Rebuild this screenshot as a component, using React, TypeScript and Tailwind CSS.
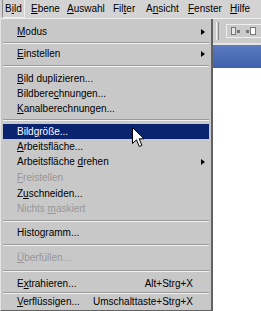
import React from "react";

type Item =
  | { kind: "item"; label: React.ReactNode; h?: number; sub?: boolean; shortcut?: string; disabled?: boolean; active?: boolean }
  | { kind: "sep"; h: number };

const u = (s: string) => <u className="underline underline-offset-[1px]">{s}</u>;

const items: Item[] = [
  { kind: "item", label: <>{u("M")}odus</>, sub: true },
  { kind: "sep", h: 7 },
  { kind: "item", label: <>{u("E")}instellen</>, sub: true },
  { kind: "sep", h: 10 },
  { kind: "item", label: <>{u("B")}ild duplizieren...</> },
  { kind: "item", label: <>Bildbere{u("c")}hnungen...</> },
  { kind: "item", label: <>{u("K")}analberechnungen...</> },
  { kind: "sep", h: 8 },
  { kind: "item", label: <>Bild{u("g")}röße...</>, active: true },
  { kind: "item", label: <>{u("A")}rbeitsfläche...</> },
  { kind: "item", label: <>Arbeitsfläche {u("d")}rehen</>, sub: true, h: 16 },
  { kind: "item", label: <>{u("F")}reistellen</>, disabled: true, h: 16 },
  { kind: "item", label: <>Z{u("u")}schneiden...</> },
  { kind: "item", label: <>Nichts {u("m")}askiert</>, disabled: true },
  { kind: "sep", h: 9 },
  { kind: "item", label: <>Histo{u("g")}ramm...</> },
  { kind: "sep", h: 10 },
  { kind: "item", label: <>{u("Ü")}berfüllen...</>, disabled: true },
  { kind: "sep", h: 11 },
  { kind: "item", label: <>E{u("x")}trahieren...</>, shortcut: "Alt+Strg+X" },
  { kind: "sep", h: 4 },
  { kind: "item", label: <>{u("V")}erflüssigen...</>, shortcut: "Umschalttaste+Strg+X", h: 14 },
];

const menus = [
  { label: <>B{u("i")}ld</>, w: "w-[26px]" },
  { label: <>{u("E")}bene</>, w: "w-[36px]" },
  { label: <>{u("A")}uswahl</>, w: "w-[46px]" },
  { label: <>Fil{u("t")}er</>, w: "w-[33px]" },
  { label: <>A{u("n")}sicht</>, w: "w-[42px]" },
  { label: <>{u("F")}enster</>, w: "w-[42px]" },
  { label: <>{u("H")}ilfe</>, w: "w-[30px]" },
];

function MenuRow({ item }: { item: Item }) {
  if (item.kind === "sep") {
    return (
      <div className="flex items-center" style={{ height: item.h }}>
        <div className="w-full border-t border-t-[#9a9a9a] border-b border-b-[#f2f2f2]" />
      </div>
    );
  }
  const color = item.active ? "bg-[#0b2470] text-white" : item.disabled ? "text-[#979797]" : "text-black";
  return (
    <div className={`flex items-center justify-between pl-[14px] ${color}`} style={{ height: item.h ?? 15 }}>
      <span className="whitespace-nowrap">{item.label}</span>
      {item.sub && (
        <span className="mr-[4px] h-0 w-0 border-y-[3.5px] border-y-transparent border-l-[4px] border-l-black" />
      )}
      {item.shortcut && <span className="mr-[16px] whitespace-nowrap">{item.shortcut}</span>}
    </div>
  );
}

export default function App() {
  return (
    <div className="relative h-[311px] w-[261px] overflow-hidden bg-white font-['Liberation_Sans',Arial,sans-serif] text-[10px] leading-none text-black">
      <div className="flex h-[19px] items-center border-b border-b-[#ededed] bg-[#d3d3d3] pl-[5px]">
        {menus.map((m, i) => (
          <span key={i} className={`${m.w} whitespace-nowrap`}>
            {i === 0 ? (
              <span className="-ml-[3px] border border-t-[#8a8a8a] border-l-[#8a8a8a] border-r-[#f0f0f0] border-b-[#f0f0f0] px-[2px] py-[3px]">
                {m.label}
              </span>
            ) : (
              m.label
            )}
          </span>
        ))}
      </div>

      <div className="flex">
        <div className="h-[292px] w-[213px] border-l border-l-[#e4e4e4] border-r-2 border-r-[#626262] border-b border-b-[#626262] bg-[#c8c8c8] px-[2px] pt-[5px]">
          {items.map((it, i) => (
            <MenuRow key={i} item={it} />
          ))}
        </div>

        <div className="flex flex-1 flex-col">
          <div className="flex h-[24px] items-center bg-[#cbcbcb] pl-[3px]">
            <div className="h-[18px] w-[3px] border-l border-l-[#f2f2f2] border-r border-r-[#8c8c8c]" />
            <div className="ml-[7px] flex h-[14px] flex-1 items-center gap-[6px] border border-[#efefef] border-r-0 pl-[4px]">
              <div className="flex items-center">
                <div className="h-[8px] w-[5px] border border-[#777] bg-[#e8e8e8]" />
                <div className="ml-[1px] h-[3px] w-[3px] bg-[#777]" />
              </div>
              <div className="flex items-center">
                <div className="h-[3px] w-[3px] bg-[#777]" />
                <div className="ml-[1px] h-[8px] w-[6px] border border-[#777] bg-white" />
              </div>
            </div>
          </div>
          <div className="h-[2px] bg-[#e6e6e6]" />
          <div className="h-[23px] bg-gradient-to-b from-[#5a7bc0] to-[#3f60ad]" />
          <div className="flex-1 bg-white" />
        </div>
      </div>

      <svg className="absolute left-[132px] top-[127px]" width="14" height="22" viewBox="0 0 14 22">
        <path d="M0.5 0.5 L0.5 16.5 L4.5 12.8 L7.3 19.5 L9.8 18.4 L7.2 11.8 L12 11.8 Z" fill="white" stroke="black" strokeWidth="1" strokeLinejoin="miter" />
      </svg>
    </div>
  );
}
